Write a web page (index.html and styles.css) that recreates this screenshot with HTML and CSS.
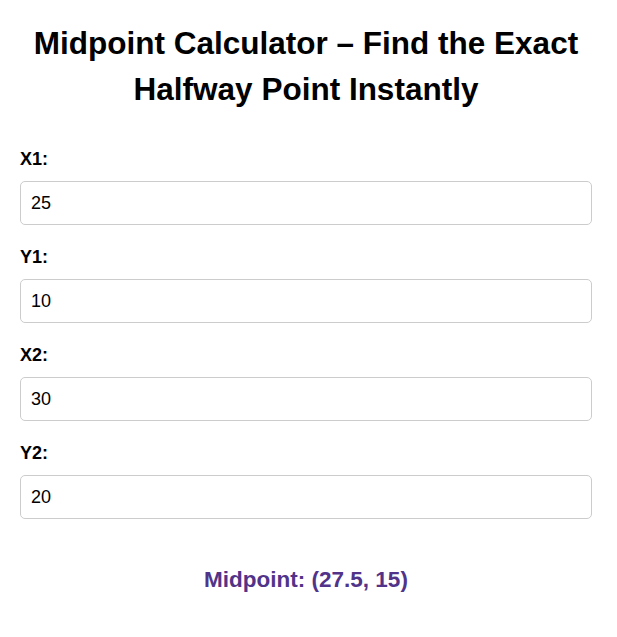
FILE: index.html
```html
<!DOCTYPE html>
<html lang="en">
<head>
    <meta charset="UTF-8">
    <meta name="viewport" content="width=device-width, initial-scale=1.0">
    <title>Midpoint Calculator</title>
    <link rel="stylesheet" href="styles.css">
</head>
<body>
    <div class="calculator">
        <h1>Midpoint Calculator – Find the Exact Halfway Point Instantly</h1>

        <label for="x1">X1:</label>
        <input type="number" id="x1" value="25">

        <label for="y1">Y1:</label>
        <input type="number" id="y1" value="10">

        <label for="x2">X2:</label>
        <input type="number" id="x2" value="30">

        <label for="y2">Y2:</label>
        <input type="number" id="y2" value="20">

        <div class="result" id="result">Midpoint: (27.5, 15)</div>
    </div>
</body>
</html>
```

FILE: styles.css
```css
body {
    font-family: 'Liberation Sans', Arial, sans-serif;
    background: #ffffff;
    margin: 0;
    color: #000;
}
.calculator {
    width: 572px;
    padding: 20px 25px 20px 20px;
}
h1 {
    font-size: 31.5px;
    line-height: 46px;
    text-align: center;
    margin: 0 0 36px 0;
}
label {
    display: block;
    font-size: 18px;
    line-height: 23px;
    font-weight: bold;
    margin-bottom: 10px;
}
input {
    display: block;
    width: 100%;
    box-sizing: border-box;
    height: 44px;
    padding: 0 10px;
    font-family: 'Liberation Sans', Arial, sans-serif;
    font-size: 18px;
    border: 1px solid #cccccc;
    border-radius: 5px;
    margin-bottom: 21px;
    -moz-appearance: textfield;
}
input::-webkit-outer-spin-button,
input::-webkit-inner-spin-button {
    -webkit-appearance: none;
    margin: 0;
}
.result {
    text-align: center;
    font-size: 22.5px;
    font-weight: bold;
    color: #51348a;
    margin-top: 48px;
}
```
